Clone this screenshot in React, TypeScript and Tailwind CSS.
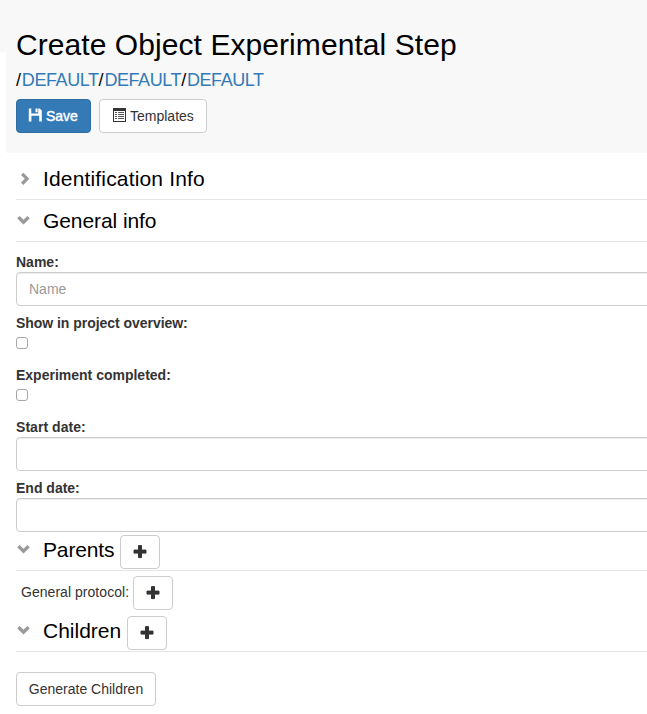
import React from "react";

const ChevronRight = () => (
  <svg width="14" height="14" viewBox="0 0 14 14" className="shrink-0 overflow-visible">
    <path fill="#999999" d="M7.3 0.7L13.4 6.8L7.3 12.9L5 10.6L8.8 6.8L5 3Z" />
  </svg>
);

const ChevronDown = () => (
  <svg width="14" height="14" viewBox="0 0 14 14" className="shrink-0 overflow-visible">
    <path fill="#999999" d="M1.2 4.2L3.6 1.9L7.5 5.7L11.4 1.9L13.8 4.2L7.5 10.4Z" />
  </svg>
);

const SaveIcon = () => (
  <svg width="14" height="14" viewBox="0 0 14 14" className="mb-0.5 shrink-0">
    <path
      fill="#ffffff"
      fillRule="evenodd"
      d="M0.8 0.5H3.3V5.6H10.2V0.5H11.6L13.8 2.6V13.5H11.2V7.8H3.4V13.5H0.8ZM7.5 0.5H9.6V4.2H7.5Z"
    />
  </svg>
);

const ListIcon = () => (
  <svg width="14" height="14" viewBox="0 0 14 14" className="mb-0.5 shrink-0">
    <path fill="#333333" fillRule="evenodd" d="M1 0H14V14H1ZM2 3V13H13V3Z" />
    <path
      fill="#555555"
      d="M3 4H5V5H3ZM6 4H12V5H6ZM3 6H5V7H3ZM6 6H12V7H6ZM3 8H5V9H3ZM6 8H12V9H6ZM3 10H5V11H3ZM6 10H12V11H6Z"
    />
  </svg>
);

const PlusButton = () => (
  <button className="flex h-[34px] w-10 shrink-0 items-center justify-center rounded border border-[#cccccc] bg-white">
    <svg width="14" height="14" viewBox="0 0 14 14">
      <path
        fill="#333333"
        stroke="#333333"
        strokeLinejoin="round"
        d="M5.5 0.6H8.5V5.1H13V8.1H8.5V12.6H5.5V8.1H1V5.1H5.5Z"
      />
    </svg>
  </button>
);

const inputClass =
  "block h-[34px] w-[700px] rounded border border-[#cccccc] bg-white px-3 text-sm shadow-[inset_0_1px_1px_rgba(0,0,0,0.075)] placeholder:text-[#999999]";

const checkboxClass = "block size-3 appearance-none rounded-[3px] border border-[#a8a8a8] bg-white";

const App = () => {
  return (
    <div
      className="h-[714px] w-full overflow-hidden bg-white text-sm leading-5 text-[#333333]"
      style={{ fontFamily: '"Liberation Sans", Arial, sans-serif' }}
    >
      <header className="relative h-[153px] bg-[#f8f8f8] pt-7 pl-4">
        <div className="absolute top-[52px] left-0 h-[101px] w-1.5 bg-white" />
        <h1 className="text-[30px] leading-[33px] tracking-[0.07px] whitespace-nowrap text-black">
          Create Object Experimental Step
        </h1>
        <div className="mt-[9px] text-[18px] leading-5 tracking-[-0.42px] text-black">
          <span className="tracking-[0.8px]">/</span>
          <a className="text-[#337ab7]">DEFAULT</a>
          <span className="tracking-[0.8px]">/</span>
          <a className="text-[#337ab7]">DEFAULT</a>
          <span className="tracking-[0.8px]">/</span>
          <a className="text-[#337ab7]">DEFAULT</a>
        </div>
        <div className="mt-[9px] flex gap-2">
          <button className="flex h-[34px] w-[75px] items-center gap-1 rounded border border-[#2e6da4] bg-[#337ab7] pl-[11px] text-white">
            <SaveIcon />
            <span className="[-webkit-text-stroke:0.4px_white]">Save</span>
          </button>
          <button className="flex h-[34px] w-[108px] items-center gap-1 rounded border border-[#cccccc] bg-white pl-3 whitespace-nowrap">
            <ListIcon />
            Templates
          </button>
        </div>
      </header>

      <main className="pl-4">
        <div className="flex h-[47px] items-center gap-[13px] border-b border-[#e5e5e5] pt-[6px]">
          <ChevronRight />
          <h2 className="text-[21px] leading-6 tracking-[0.16px] text-black">Identification Info</h2>
        </div>
        <div className="flex h-[42px] items-center gap-[13px] border-b border-[#e5e5e5] pt-px">
          <ChevronDown />
          <h2 className="text-[21px] leading-6 tracking-[-0.08px] text-black">General info</h2>
        </div>

        <div className="mt-[10px]">
          <label className="block font-bold">Name:</label>
          <input className={inputClass} placeholder="Name" />
        </div>
        <div className="mt-[7px] h-[52px]">
          <label className="mb-1 block font-bold tracking-[-0.04px]">Show in project overview:</label>
          <input type="checkbox" className={checkboxClass} />
        </div>
        <div className="h-[52px]">
          <label className="mb-1 block font-bold">Experiment completed:</label>
          <input type="checkbox" className={checkboxClass} />
        </div>
        <div>
          <label className="block font-bold tracking-[0.05px]">Start date:</label>
          <input className={inputClass} />
        </div>
        <div className="mt-[7px]">
          <label className="block font-bold">End date:</label>
          <input className={inputClass} />
        </div>

        <div className="flex h-[39px] items-start border-b border-[#e5e5e5] pt-[3px]">
          <div className="flex w-[104px] items-center gap-[13px] pt-[3px]">
            <ChevronDown />
            <h2 className="text-[21px] leading-6 tracking-[-0.14px] text-black">Parents</h2>
          </div>
          <PlusButton />
        </div>
        <div className="mt-[5px] flex pl-[5px]">
          <span className="w-28 pt-[6px] tracking-[0.04px] whitespace-nowrap">General protocol:</span>
          <PlusButton />
        </div>
        <div className="mt-[6px] flex h-9 items-start border-b border-[#e5e5e5]">
          <div className="flex w-[111px] items-center gap-[13px] pt-[3px]">
            <ChevronDown />
            <h2 className="text-[21px] leading-6 text-black">Children</h2>
          </div>
          <PlusButton />
        </div>

        <button className="mt-5 h-[34px] w-[140px] rounded border border-[#cccccc] bg-white whitespace-nowrap">
          Generate Children
        </button>
      </main>
    </div>
  );
};

export default App;
